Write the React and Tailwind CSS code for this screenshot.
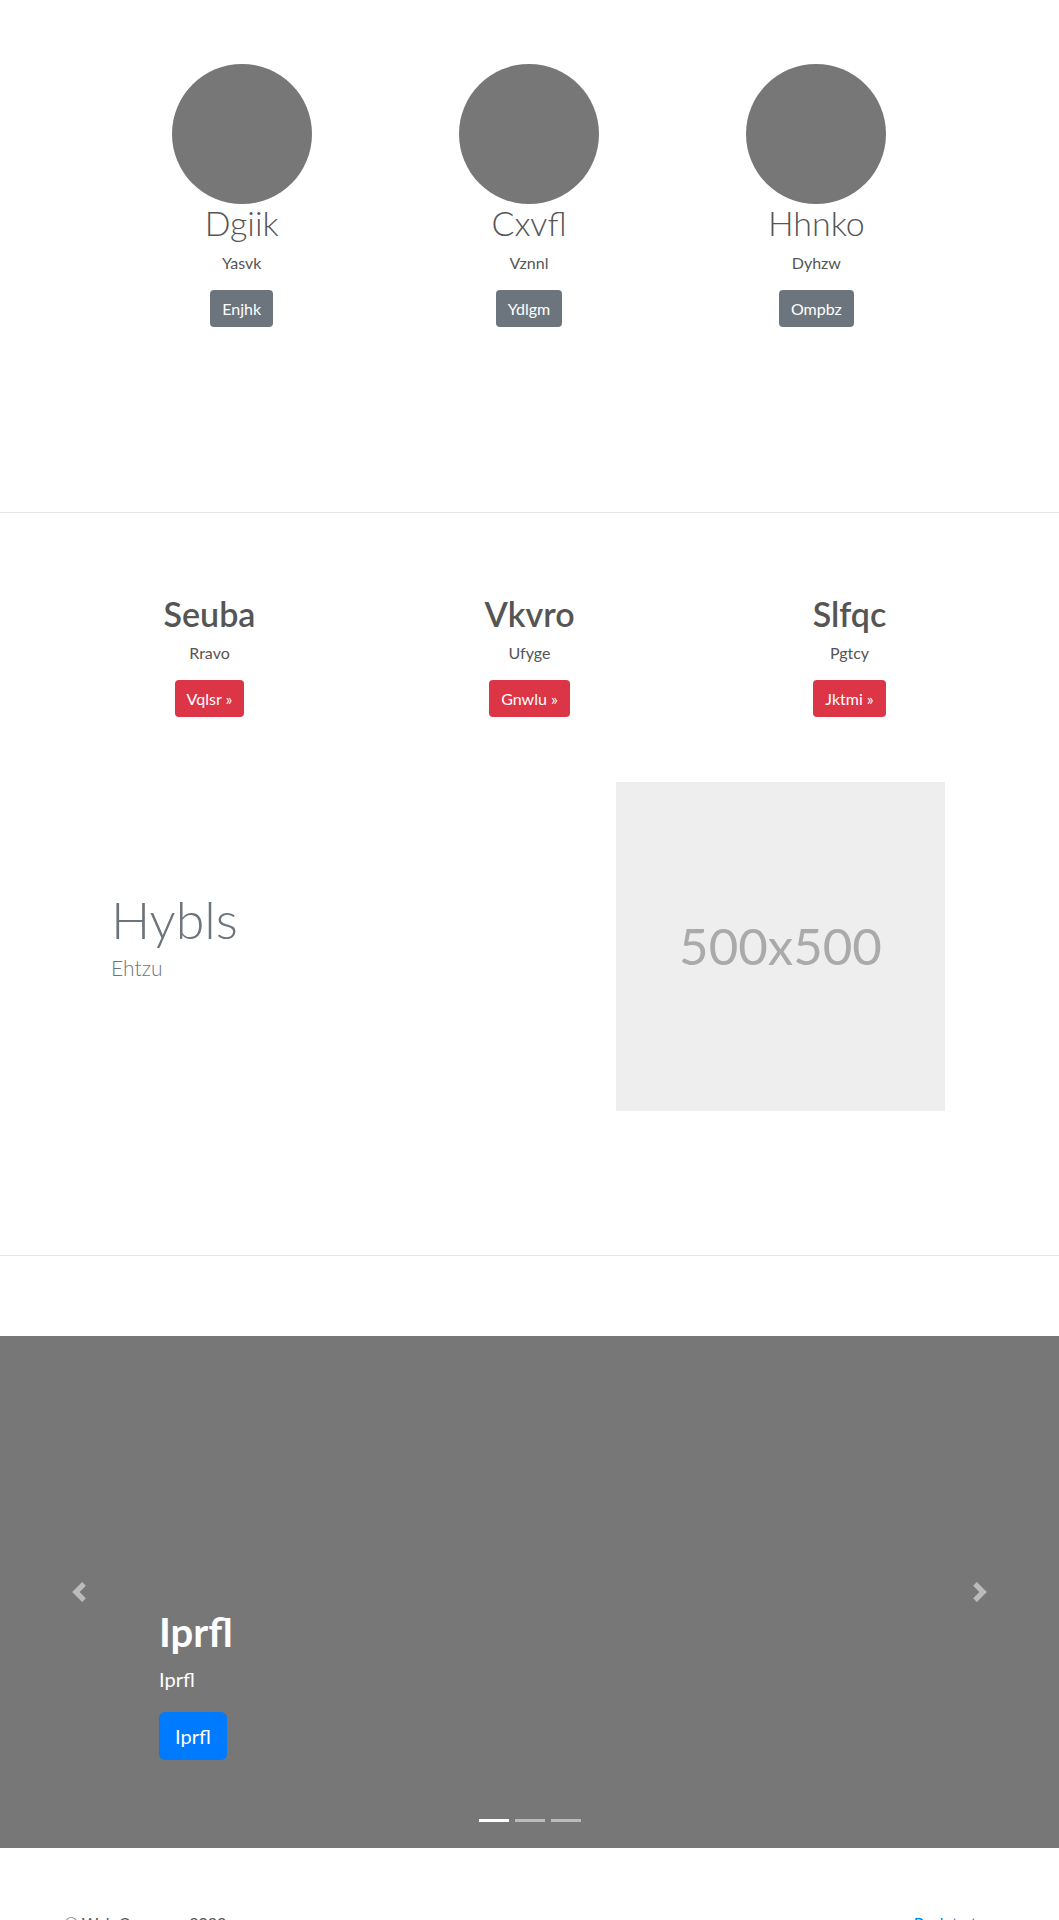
import React from "react";

const font = { fontFamily: 'Lato, "Open Sans", Arial, sans-serif' };

function Chevron({ dir }) {
  return (
    <svg width="20" height="20" viewBox="0 0 8 8" fill="#fff" className="opacity-50">
      {dir === "left" ? (
        <path d="M5.25 0l-4 4 4 4 1.5-1.5L4.25 4l2.5-2.5L5.25 0z" />
      ) : (
        <path d="M2.75 0l-1.5 1.5L3.75 4l-2.5 2.5L2.75 8l4-4-4-4z" />
      )}
    </svg>
  );
}

export default function App() {
  const people = [
    ["Dgiik", "Yasvk", "Enjhk"],
    ["Cxvfl", "Vznnl", "Ydlgm"],
    ["Hhnko", "Dyhzw", "Ompbz"],
  ];
  const features = [
    ["Seuba", "Rravo", "Vqlsr »"],
    ["Vkvro", "Ufyge", "Gnwlu »"],
    ["Slfqc", "Pgtcy", "Jktmi »"],
  ];
  return (
    <div className="bg-white w-full text-[#212529]" style={font}>
      {/* Team section */}
      <section className="pt-[64px] pb-[185px]">
        <div className="w-[862px] grid grid-cols-3 ml-[98px]">
          {people.map(([n, s, b]) => (
            <div key={n} className="flex flex-col items-center">
              <div className="w-[140px] h-[140px] rounded-full bg-[#777777]" />
              <h2 className="text-[34px] leading-[38px] font-light text-[#555]">{n}</h2>
              <p className="mt-[9px] text-[16px] leading-[24px] text-[#555]">{s}</p>
              <button className="mt-[15px] h-[37px] px-[12px] rounded-[4px] bg-[#6c757d] text-white text-[16px] flex items-center">
                {b}
              </button>
            </div>
          ))}
        </div>
      </section>

      <hr className="border-0 border-t border-[#e5e5e5]" />

      {/* Features */}
      <section className="pt-[80px]">
        <div className="w-[960px] mx-auto grid grid-cols-3">
          {features.map(([h, s, b]) => (
            <div key={h} className="flex flex-col items-center">
              <h2 className="text-[34px] leading-[41px] font-semibold text-[#555]">{h}</h2>
              <p className="mt-[7px] text-[16px] leading-[24px] text-[#555]">{s}</p>
              <button className="mt-[15px] h-[37px] px-[12px] rounded-[4px] bg-[#dc3545] text-white text-[16px] flex items-center">
                {b}
              </button>
            </div>
          ))}
        </div>

        <div className="mt-[65px] flex items-start">
          <div className="w-[616px] pl-[111px] pt-[109px]">
            <h2 className="text-[52px] leading-[57px] font-light text-[#6c757d]">Hybls</h2>
            <p className="mt-[4px] text-[21px] leading-[1.5] font-light text-[#6c757d]">Ehtzu</p>
          </div>
          <div className="w-[329px] h-[329px] bg-[#eeeeee] flex items-center justify-center">
            <span className="text-[51px] text-[#aaaaaa]">500x500</span>
          </div>
        </div>
      </section>

      <div className="h-[144px]" />
      <hr className="border-0 border-t border-[#e5e5e5]" />
      <div className="h-[80px]" />

      {/* Carousel */}
      <section className="relative h-[512px] bg-[#777777] flex flex-col justify-end pb-[88px] pl-[159px]">
        <h1 className="text-[40px] leading-[1.2] font-bold text-white">Iprfl</h1>
        <p className="mt-[8px] text-[20px] leading-[1.5] text-white">Iprfl</p>
        <div className="mt-[18px]">
          <button className="h-[48px] px-[16px] rounded-[6px] bg-[#007bff] text-white text-[20px]">Iprfl</button>
        </div>
        <div className="absolute left-[69px] top-1/2 -translate-y-1/2">
          <Chevron dir="left" />
        </div>
        <div className="absolute left-[970px] top-1/2 -translate-y-1/2">
          <Chevron dir="right" />
        </div>
        <div className="absolute bottom-[26px] left-0 right-0 flex justify-center">
          <span className="w-[30px] h-[3px] mx-[3px] bg-white" />
          <span className="w-[30px] h-[3px] mx-[3px] bg-white opacity-50" />
          <span className="w-[30px] h-[3px] mx-[3px] bg-white opacity-50" />
        </div>
      </section>

      {/* Footer */}
      <footer className="w-[930px] mx-auto pt-[63px] pb-[40px] flex justify-between text-[16px] leading-[24px]">
        <p className="text-[#555]">© Web Company 2023</p>
        <a className="text-[#007bff]">Back to top</a>
      </footer>
    </div>
  );
}
